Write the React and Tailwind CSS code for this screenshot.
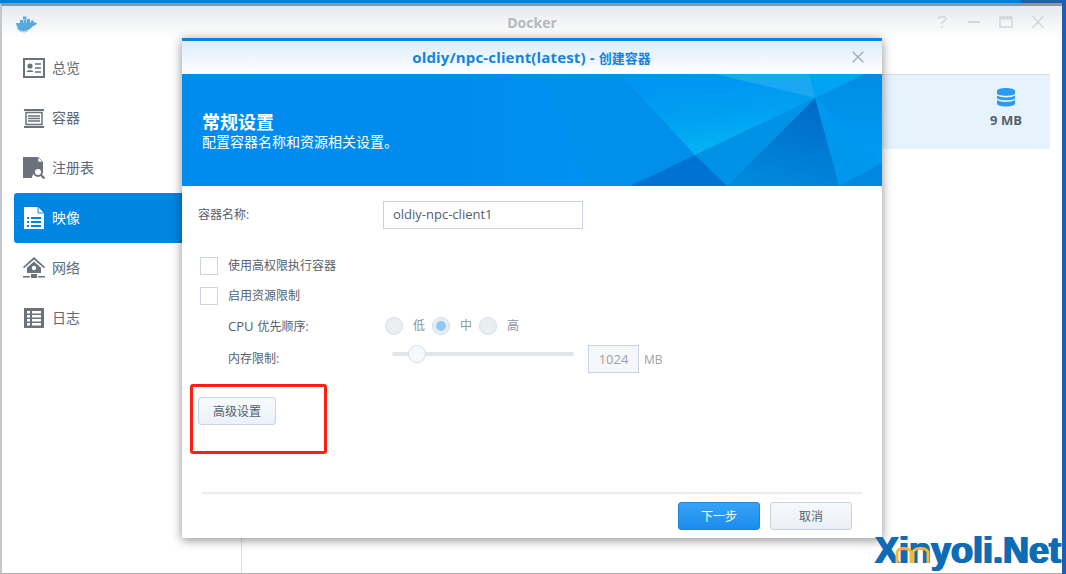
import React from "react";

const cjk = '"Open Sans","Noto Sans CJK SC",sans-serif';

function Overview({ c }) {
  return (
    <svg width="22" height="20" viewBox="0 0 22 20">
      <rect width="22" height="20" fill={c} />
      <rect x="2" y="2" width="18" height="16" fill="#fff" />
      <circle cx="7" cy="8" r="2.6" fill={c} />
      <path d="M3.500 14c.5-2.500 6.500-2.500 7 0z" fill={c} />
      <path d="M12 6h6M12 10h6M12 14h6" stroke={c} strokeWidth="1.400" />
    </svg>
  );
}
function Container({ c }) {
  return (
    <svg width="20" height="19" viewBox="0 0 20 19">
      <path d="M0 0h20v2H0zM0 17h20v2H0z" fill={c} />
      <path d="M2 3.500h16v12H2z" fill="none" stroke={c} strokeWidth="1.500" />
      <path d="M4 7h12M4 9.500h12M4 12h12" stroke={c} strokeWidth="1.300" />
    </svg>
  );
}
function Registry({ c }) {
  return (
    <svg width="22" height="22" viewBox="0 0 22 22">
      <path d="M0 0h15l5 5v10h-1a7 7 0 0 0-10 6H0z" fill={c} />
      <path d="M15 0l5 5h-5z" fill="#fff" stroke={c} strokeWidth=".6" />
      <circle cx="15" cy="15" r="4" fill="#fff" stroke={c} strokeWidth="2" />
      <path d="M18 18l3.500 3.500" stroke={c} strokeWidth="2.200" />
    </svg>
  );
}
function Image({ c }) {
  return (
    <svg width="20" height="22" viewBox="0 0 20 22">
      <path d="M0 0h14l6 6v16H0z" fill="#fff" />
      <path d="M14 0v6h6" fill="none" stroke={c} strokeWidth="1" />
      <path d="M3 10h2v2H3zM3 14h2v2H3zM3 18h2v2H3zM7 10h10v2H7zM7 14h10v2H7zM7 18h10v2H7z" fill={c} />
    </svg>
  );
}
function Network({ c }) {
  return (
    <svg width="22" height="22" viewBox="0 0 22 22">
      <path d="M11 0L22 10l-1 1.200L11 2.600 1 11.200 0 10z" fill={c} />
      <path d="M11 4.500l7 6.200V16H4v-5.300z" fill={c} />
      <circle cx="11" cy="11" r="2.200" fill="#fff" />
      <path d="M8 17h6v4H8zM0 19h7v1.500H0zM15 19h7v1.500h-7z" fill={c} />
    </svg>
  );
}
function Log({ c }) {
  return (
    <svg width="20" height="20" viewBox="0 0 20 20">
      <rect width="20" height="20" fill={c} />
      <path d="M3 3h3v2.500H3zM3 7h3v2.500H3zM3 11h3v2.500H3zM3 15h3v2.500H3zM8 3h9v2.500H8zM8 7h9v2.500H8zM8 11h9v2.500H8zM8 15h9v2.500H8z" fill="#fff" />
    </svg>
  );
}

const nav = [
  ["总览", Overview],
  ["容器", Container],
  ["注册表", Registry],
  ["映像", Image, true],
  ["网络", Network],
  ["日志", Log],
];

function NavItem({ label, Icon, active }) {
  return (
    <div className={`flex h-[50px] w-[168px] items-center rounded-l-[3px] ${active ? "bg-[#0085e3] text-white" : "text-[#606a75]"}`}>
      <div className="flex w-[38px] shrink-0 justify-center pl-[1px]">
        <Icon c={active ? "#0085e3" : "#6b727b"} />
      </div>
      <span className="text-[14px] leading-none">{label}</span>
    </div>
  );
}

function Radio({ on }) {
  return (
    <span className="flex size-[18px] items-center justify-center rounded-full border border-[#d3dde8] bg-[#e9eef3]">
      {on && <span className="size-[10px] rounded-full bg-[#90c9f5]" />}
    </span>
  );
}

function Check() {
  return <span className="size-[18px] border border-[#c8d3df] bg-white" />;
}

function Banner() {
  return (
    <div className="relative h-[112px] shrink-0 overflow-hidden bg-[#008cee] pl-[20px] pt-[37px] text-white">
      <svg className="absolute inset-0" width="700" height="112" viewBox="0 0 700 112">
        <defs>
          <linearGradient id="base" x1="0" x2="1">
            <stop offset="0.4" stopColor="#008cee" />
            <stop offset="0.62" stopColor="#0092f2" />
            <stop offset="1" stopColor="#0096f0" />
          </linearGradient>
          <linearGradient id="glow" x1="0.35" y1="0" x2="0.6" y2="1">
            <stop offset="0" stopColor="#0094f2" />
            <stop offset="0.5" stopColor="#00a0f2" />
            <stop offset="1" stopColor="#06b6f4" />
          </linearGradient>
          <linearGradient id="deep" x1="0.8" y1="0" x2="0.5" y2="1">
            <stop offset="0" stopColor="#0068c8" />
            <stop offset="1" stopColor="#0088dc" />
          </linearGradient>
          <linearGradient id="side" x1="0" y1="0" x2="0" y2="1">
            <stop offset="0" stopColor="#008ce6" />
            <stop offset="1" stopColor="#009cf4" />
          </linearGradient>
        </defs>
        <rect width="700" height="112" fill="url(#base)" />
        <path d="M358 0L406 112H448L513 81 438 0z" fill="#0090ec" />
        <path d="M438 0L513 81 633 24 533 0z" fill="url(#glow)" />
        <path d="M533 0L633 24 628 0z" fill="#1aa8f2" />
        <path d="M628 0L633 24 683 0z" fill="#00a4f6" />
        <path d="M683 0L633 24 700 89V0z" fill="url(#side)" />
        <path d="M633 24L657 112 700 89z" fill="#0098ee" />
        <path d="M700 89L657 112H700z" fill="#0088e0" />
        <path d="M633 24L545 112H657z" fill="url(#deep)" />
        <path d="M513 81L545 112 633 24z" fill="#0092e4" />
        <path d="M448 112L513 81 545 112z" fill="#0073d2" />
      </svg>
      <div className="relative">
        <div className="text-[18px] font-bold leading-[22px]">常规设置</div>
        <div className="text-[14px] leading-[18px]">配置容器名称和资源相关设置。</div>
      </div>
    </div>
  );
}

function Dialog() {
  return (
    <div className="absolute left-[182px] top-[38px] flex h-[500px] w-[700px] flex-col border-t-[3px] border-[#0085e3] bg-white shadow-[0_2px_10px_rgba(0,0,0,0.45)]">
      <div className="relative flex h-[33px] shrink-0 items-center justify-center bg-gradient-to-b from-[#dcedfb] to-white pr-[1px] text-[15px] font-bold tracking-[0.15px] text-[#1483e0]">
        <span>oldiy/npc-client(latest) - <span className="text-[13px] tracking-normal">创建容器</span></span>
        <svg className="absolute right-[18px] top-[10px]" width="12" height="12" viewBox="0 0 12 12">
          <path d="M.7.7l10.600 10.600M11.300.7L.7 11.300" stroke="#a8b0b8" strokeWidth="1.500" />
        </svg>
      </div>
      <Banner />
      <div className="flex flex-1 flex-col px-[16px] text-[12px] text-[#56606b]">
        <div className="mt-[15px] flex h-[28px] items-center">
          <span className="w-[185px]">容器名称:</span>
          <div className="flex h-[28px] w-[200px] items-center border border-[#c8d3df] px-[9px] text-[13px]">oldiy-npc-client1</div>
        </div>
        <div className="ml-[2px] mt-[28px] flex h-[18px] items-center gap-[10px]"><Check /><span>使用高权限执行容器</span></div>
        <div className="ml-[2px] mt-[12px] flex h-[18px] items-center gap-[10px]"><Check /><span>启用资源限制</span></div>
        <div className="mt-[12px] flex h-[18px] items-center">
          <span className="ml-[30px] w-[157px] pt-[2px]"><span className="mr-[1px] text-[13px]">CPU</span> 优先顺序:</span>
          <Radio /><span className="ml-[10px] w-[19px] text-[#8d959e]">低</span>
          <Radio on /><span className="ml-[10px] w-[19px] text-[#8d959e]">中</span>
          <Radio /><span className="ml-[10px] text-[#8d959e]">高</span>
        </div>
        <div className="mt-[10px] flex h-[28px] items-center">
          <span className="ml-[30px] w-[164px] self-start pt-[5px]">内存限制:</span>
          <div className="relative mb-[10px] h-[4px] w-[182px] rounded-full bg-[#e0e5e8]">
            <span className="absolute left-[16px] top-[-7px] size-[18px] rounded-full border border-[#d3dde8] bg-[#f6f9fc]" />
          </div>
          <div className="ml-[14px] flex h-[28px] w-[51px] items-center justify-center border border-[#c8d3df] bg-[#f5f7f9] pt-[1px] text-[13px] text-[#9aa2ab]">1024</div>
          <span className="ml-[5px] pt-[1px] text-[12px] text-[#9aa2ab]">MB</span>
        </div>
        <button className="mt-[24px] h-[28px] w-[78px] rounded-[3px] border border-[#c8d3df] bg-gradient-to-b from-[#f8fbfe] to-[#eaf1f8] pt-[1px] text-[12px]">高级设置</button>
      </div>
      <div className="mx-[20px] h-[2px] bg-[#ececec]" />
      <div className="flex h-[44px] shrink-0 items-start justify-end gap-[10px] pr-[30px] pt-[8px] text-[12px]">
        <button className="h-[28px] w-[82px] rounded-[3px] border border-[#1c86dd] bg-gradient-to-b from-[#35a3f8] to-[#1a8cec] pt-[1px] text-white">下一步</button>
        <button className="h-[28px] w-[82px] rounded-[3px] border border-[#c8d3df] bg-gradient-to-b from-[#f6f9fc] to-[#e9eff5] pt-[1px] text-[#5a6470]">取消</button>
      </div>
      <div className="absolute left-[8px] top-[343px] h-[70px] w-[137px] rounded-[3px] border-[3px] border-[#ff1f10]" />
    </div>
  );
}

function Watermark() {
  return (
    <div className="absolute left-[875px] top-[533px] h-[38px] w-[188px]">
      <span
        className="block whitespace-nowrap text-[36px] font-bold leading-[36px] text-[#0e6cb5] [text-shadow:1px_0_0_#0e6cb5,-1px_0_0_#0e6cb5]"
        style={{ fontFamily: '"Liberation Sans",sans-serif' }}
      >
        Xinyoli.Net
      </span>
      <svg className="absolute left-[20px] top-[10px]" width="36" height="21" viewBox="0 0 36 21">
        <path d="M2 20V10C2 4 16 4 16 10V20M18 20V10C18 4 33 4 33 10V20" fill="none" stroke="#f6b73c" strokeWidth="3" />
      </svg>
    </div>
  );
}

export default function App() {
  return (
    <div className="relative flex h-[574px] w-[1066px] flex-col overflow-hidden bg-[#1d5fae]" style={{ fontFamily: cjk }}>
      <div className="h-[3px] w-[1021px] shrink-0 bg-[#0080dd]" />
      <div className="mr-[4px] flex h-[571px] flex-col border-l-[2px] border-t-[3px] border-b border-[#c4c8cc] border-t-[#8f979e] border-b-[#b0b0b0] bg-white">
        <div className="relative flex h-[32px] shrink-0 items-center justify-center bg-gradient-to-b from-[#e6e9ed] to-white">
          <svg className="absolute left-[13px] top-[6px]" width="24" height="21" viewBox="0 0 24 21">
            <path d="M2 16c2 3 7 4.500 11 3-4 2-9 1-11-3z" fill="#c6ccd2" stroke="#c6ccd2" />
            <path d="M1 11h14c1-1 1-2 2-3 1 .5 2 1.500 2 2.500 1 0 2 0 3 .5-1 2-3 3-4 3-2 3-6 5-10 5-4 0-6-3-7-8z" fill="#55aae0" />
            <path d="M5 8h3v3H5zM8.500 8h3v3h-3zM8 4.500h3.500v3H8zM12 7h3v4h-3z" fill="#55aae0" />
          </svg>
          <span className="pt-[1px] text-[14px] font-bold text-[#b4b9be]">Docker</span>
          <div className="absolute right-[17px] top-[10px] flex items-center gap-[18px]">
            <svg width="14" height="12" viewBox="0 0 14 12"><path d="M3 3c0-3 8-3 8 0 0 2.500-4 2-4 5M7 10v2" fill="none" stroke="#d4d7da" strokeWidth="1.500" /></svg>
            <svg width="14" height="12" viewBox="0 0 14 12"><path d="M1 6h12" stroke="#d4d7da" strokeWidth="2" /></svg>
            <svg width="14" height="12" viewBox="0 0 14 12"><path d="M1 1h12v10H1z" fill="none" stroke="#d4d7da" strokeWidth="1.500" /><path d="M1 2h12" stroke="#d4d7da" strokeWidth="3" /></svg>
            <svg width="14" height="12" viewBox="0 0 14 12"><path d="M1.500 0l11 12M12.500 0l-11 12" stroke="#d4d7da" strokeWidth="1.500" /></svg>
          </div>
        </div>
        <div className="flex flex-1">
          <div className="w-[240px] shrink-0 border-r border-[#dcdfe3] pl-[12px] pt-[5px]">
            {nav.map(([label, Icon, active]) => (
              <NavItem key={label} label={label} Icon={Icon} active={active} />
            ))}
          </div>
          <div className="flex-1 pr-[12px] pt-[36px]">
            <div className="flex h-[75px] flex-col items-end border-t border-[#d5dfe9] bg-[#e6f3fd]">
              <div className="mr-[27px] mt-[13px] flex w-[34px] flex-col items-center gap-[4px]">
                <svg width="18" height="19" viewBox="0 0 18 19">
                  <path d="M0 3c0-4 18-4 18 0v2.500c0 3-18 3-18 0zM0 7.500c3 2.500 15 2.500 18 0V10c0 3-18 3-18 0zM0 12c3 2.500 15 2.500 18 0v3.500c0 4-18 4-18 0z" fill="#2b9af3" />
                </svg>
                <span className="whitespace-nowrap text-[13px] font-bold leading-[18px] text-[#56606b]">9 MB</span>
              </div>
            </div>
          </div>
        </div>
      </div>
      <Dialog />
      <Watermark />
    </div>
  );
}
